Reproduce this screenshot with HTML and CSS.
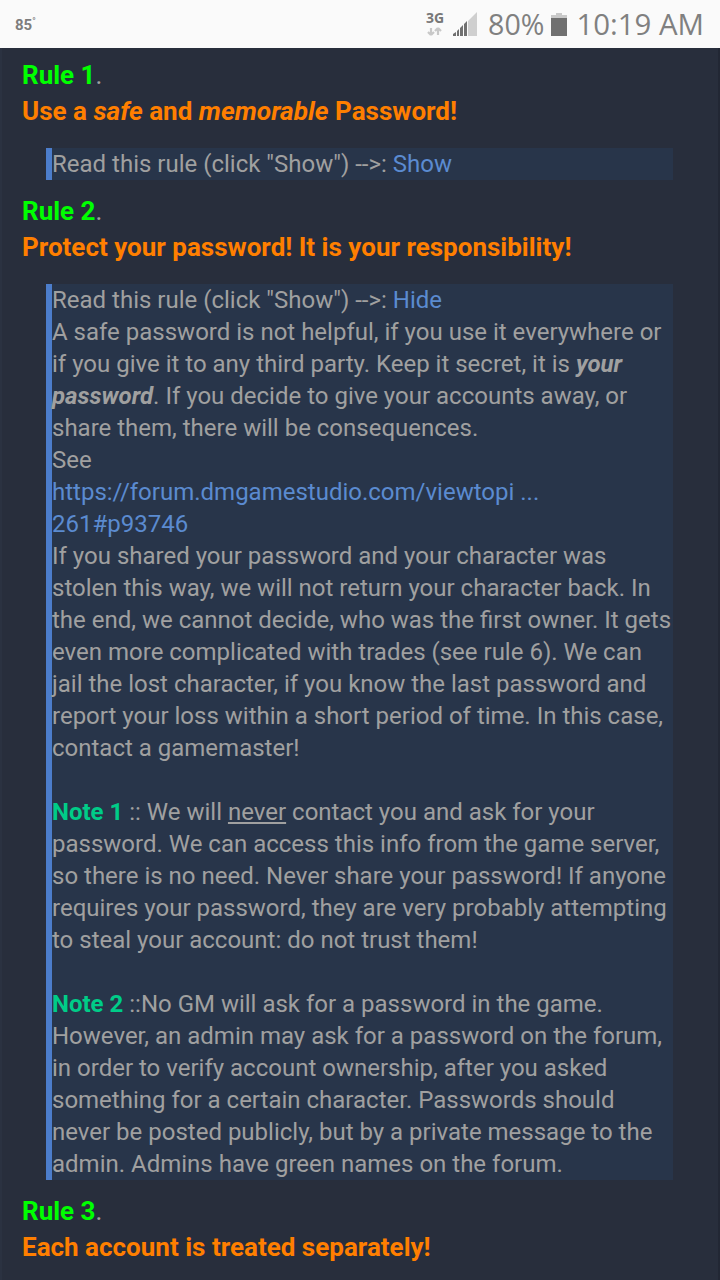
FILE: index.html
```html
<!DOCTYPE html>
<html lang="en">
<head>
<meta charset="utf-8">
<title>Rules</title>
<link rel="stylesheet" href="styles.css">
</head>
<body>
<header class="status">
  <span class="temp">85<sup class="deg">°</sup></span>
  <div class="status-right">
    <svg class="net" width="22" height="32" viewBox="0 0 22 32">
      <text x="0" y="15" class="net-text">3G</text>
      <path d="M5 27V20M5 27l-3-3M5 27l3-3" class="arrow-a"/>
      <path d="M12 27v-7M12 20l-3 3M12 20l3 3" class="arrow-b"/>
    </svg>
    <svg class="signal" width="24" height="24" viewBox="0 0 24 24">
      <path d="M24 0V24H15V9Z" fill="#cfcfcf"/>
      <path d="M0 24v-2l3-2v4zM4 24v-5l2-2v7zM7 24v-8l3-3v11zM11 24v-12l3-3v15z" fill="#707070"/>
    </svg>
    <span class="pct">80%</span>
    <svg class="battery" width="16" height="23" viewBox="0 0 16 23">
      <path d="M5 0h6v2h5v21H0V2h5z" fill="#c9c9c9"/>
      <rect y="5" width="16" height="18" fill="#707070"/>
    </svg>
    <span class="time">10:19 AM</span>
  </div>
</header>
<main class="page">
  <section class="rule">
    <div class="rule-title"><b class="green">Rule 1</b>.</div>
    <div class="rule-head">Use a <i class="em">safe</i> and <i class="em">memorable</i> Password!</div>
    <div class="box">Read this rule (click "Show") --&gt;: <a class="link">Show</a></div>
  </section>
  <section class="rule">
    <div class="rule-title"><b class="green">Rule 2</b>.</div>
    <div class="rule-head">Protect your password! It is your responsibility!</div>
    <div class="box">Read this rule (click "Show") --&gt;: <a class="link">Hide</a><br>
A safe password is not helpful, if you use it everywhere or if you give it to any third party. Keep it secret, it is <b><i>your password</i></b>. If you decide to give your accounts away, or share them, there will be consequences.<br>
See<br>
<a class="link">https://forum.dmgamestudio.com/viewtopi ...<br>261#p93746</a><br>
If you shared your password and your character was stolen this way, we will not return your character back. In the end, we cannot decide, who was the first owner. It gets even more complicated with trades (see rule 6). We can jail the lost character, if you know the last password and report your loss within a short period of time. In this case, contact a gamemaster!<br>
<br>
<b class="note">Note 1</b> :: We will <u>never</u> contact you and ask for your password. We can access this info from the game server, so there is no need. Never share your password! If anyone requires your password, they are very probably attempting to steal your account: do not trust them!<br>
<br>
<b class="note">Note 2</b> ::No GM will ask for a password in the game. However, an admin may ask for a password on the forum, in order to verify account ownership, after you asked something for a certain character. Passwords should never be posted publicly, but by a private message to the admin. Admins have green names on the forum.</div>
  </section>
  <section class="rule">
    <div class="rule-title"><b class="green">Rule 3</b>.</div>
    <div class="rule-head">Each account is treated separately!</div>
  </section>
</main>
</body>
</html>
```
FILE: styles.css
```css
* { box-sizing: border-box; }
html, body { margin: 0; padding: 0; }
body {
  width: 720px;
  height: 1280px;
  overflow: hidden;
  background: #282e3c;
  font-family: Roboto, "Liberation Sans", sans-serif;
}
.status {
  height: 48px;
  background: #fafafa;
  display: flex;
  justify-content: space-between;
  align-items: center;
  padding: 0 16px 0 15px;
  color: #7d7d7d;
}
.temp { font-size: 15px; font-weight: 700; position: relative; top: 1px; }
.deg { font-size: 9px; line-height: 0; }
.status-right { display: flex; align-items: center; }
.net { margin-right: 5px; }
.net-text { font: 700 14px "Noto Sans", sans-serif; fill: #777; }
.arrow-a, .arrow-b { fill: none; stroke-width: 2.2; }
.arrow-a { stroke: #c8c8c8; }
.arrow-b { stroke: #c8c8c8; }
.signal { margin-right: 11px; }
.pct, .time { font-family: "Open Sans", sans-serif; line-height: 48px; color: #808080; }
.pct { font-size: 28.6px; }
.time { font-size: 29.4px; }
.battery { margin: 0 9px 0 7px; }
.page {
  height: 1232px;
  padding: 9px 45px 0 20px;
  border-left: 2px solid #2b3241;
  border-right: 2px solid #222734;
  color: #a0a0a0;
  font-size: 24px;
  line-height: 32px;
}
.rule-title { font-size: 26px; line-height: 36px; color: #a0a0a0; }
.rule-head { font-size: 26px; line-height: 36px; font-weight: 700; color: #ff7f00; }
.em { font-size: 26.3px; }
.green { color: #0f0; }
.box {
  margin: 19px 0 13px 24px;
  border-left: 6px solid #4c7dcb;
  background: #28354a;
  min-height: 32px;
}
.link { color: #5b8bd0; }
.note { color: #00cc88; font-weight: 700; }
u { text-underline-offset: 2px; }
```
